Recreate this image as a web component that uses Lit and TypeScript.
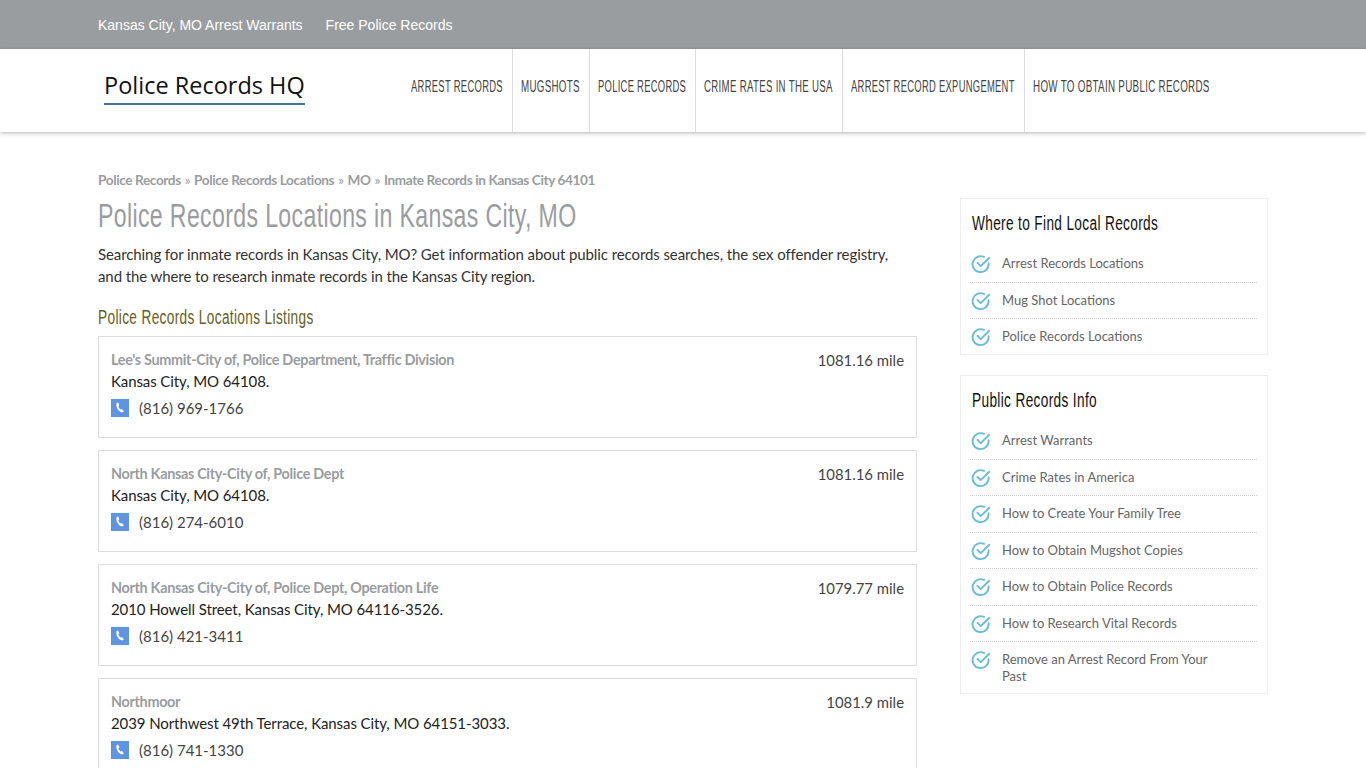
import { LitElement, html, css, svg } from 'lit';
import { customElement } from 'lit/decorators.js';

interface Listing {
  name: string;
  address: string;
  phone: string;
  distance: string;
}

interface NavItem {
  label: string;
  width: number;
  scale: number;
}

// no Oswald here, so the condensed look comes from scaling Liberation Sans
const NAV_ITEMS: NavItem[] = [
  { label: 'Arrest Records', width: 92, scale: 0.589 },
  { label: 'Mugshots', width: 59, scale: 0.61 },
  { label: 'Police Records', width: 88, scale: 0.587 },
  { label: 'Crime Rates in the USA', width: 129, scale: 0.604 },
  { label: 'Arrest Record Expungement', width: 164, scale: 0.587 },
  { label: 'How to Obtain Public Records', width: 177, scale: 0.612 },
];

const LISTINGS: Listing[] = [
  { name: "Lee's Summit-City of, Police Department, Traffic Division", address: 'Kansas City, MO 64108.', phone: '(816) 969-1766', distance: '1081.16 mile' },
  { name: 'North Kansas City-City of, Police Dept', address: 'Kansas City, MO 64108.', phone: '(816) 274-6010', distance: '1081.16 mile' },
  { name: 'North Kansas City-City of, Police Dept, Operation Life', address: '2010 Howell Street, Kansas City, MO 64116-3526.', phone: '(816) 421-3411', distance: '1079.77 mile' },
  { name: 'Northmoor', address: '2039 Northwest 49th Terrace, Kansas City, MO 64151-3033.', phone: '(816) 741-1330', distance: '1081.9 mile' },
];

const LOCAL_LINKS = ['Arrest Records Locations', 'Mug Shot Locations', 'Police Records Locations'];

const INFO_LINKS = [
  'Arrest Warrants',
  'Crime Rates in America',
  'How to Create Your Family Tree',
  'How to Obtain Mugshot Copies',
  'How to Obtain Police Records',
  'How to Research Vital Records',
  'Remove an Arrest Record From Your Past',
];

const checkIcon = svg`<svg class="check" width="20" height="20" viewBox="0 0 20 20" fill="none" stroke="#6bbcd6" stroke-width="1.9" stroke-linecap="round" stroke-linejoin="round">
  <path d="M17.6 9.2v1a8 8 0 1 1-4.6-7.3" />
  <path d="M6.4 8.8l3.3 3.3 8.5-8.3" />
</svg>`;

const phoneIcon = svg`<svg class="phone" width="18" height="18" viewBox="0 0 18 18">
  <rect width="18" height="18" fill="#5f94e0" />
  <path fill="#fff" d="M5.6 4.1l1.5-.5 1.3 2.7-1 .9c.3 1.300 1.200 2.500 2.300 3.300l1.200-.6 2 2.300-1.200 1c-1.200.5-2.700-.3-4-1.700C6 9.900 4.800 7.300 5.600 4.100z" />
</svg>`;

@customElement('app-root')
export class AppRoot extends LitElement {
  static styles = css`
    :host {
      display: block;
      height: 768px;
      overflow: hidden;
      background: #fff;
      font-family: Lato, sans-serif;
      color: #333;
    }

    a {
      color: inherit;
      text-decoration: none;
    }

    .container {
      width: 1170px;
      margin: 0 auto;
    }

    .narrow {
      display: inline-block;
      white-space: nowrap;
      letter-spacing: 0.5px;
      transform: scaleX(0.7);
      transform-origin: left center;
    }

    .topbar {
      height: 49px;
      background: #9a9da0;
    }

    .topbar .container {
      display: flex;
      gap: 23px;
      padding-top: 16px;
      font: 14px/18px 'Liberation Sans', Arial, sans-serif;
      color: #fff;
    }

    .header {
      height: 83px;
      background: #fff;
      box-shadow: 0 1px 4px rgba(0, 0, 0, 0.3);
      position: relative;
    }

    .header .container {
      display: flex;
      height: 83px;
    }

    .logo {
      flex: none;
      width: 305px;
      padding: 20px 0 0 6px;
      box-sizing: border-box;
    }

    .logo-text {
      display: inline-block;
      white-space: nowrap;
      font: 500 23.5px/32px 'Open Sans', sans-serif;
      color: #111;
      border-bottom: 2px solid #41719f;
      height: 34px;
    }

    .nav {
      display: flex;
      height: 83px;
    }

    .nav a {
      display: block;
      padding: 28px 9px 0 8px;
      border-left: 1px solid #ddd;
      font: 400 16px/20px 'Liberation Sans', sans-serif;
      letter-spacing: 0.5px;
      text-transform: uppercase;
      color: #444;
      white-space: nowrap;
    }

    .nav a:first-child {
      border-left: none;
    }

    .nav span {
      display: block;
      transform-origin: left center;
    }

    .main {
      display: grid;
      grid-template-columns: 819px 308px;
      column-gap: 43px;
      padding-top: 40px;
    }

    .crumbs {
      font-size: 13.6px;
      line-height: 18px;
      font-weight: 700;
      color: #9a9da0;
      margin-top: -1px;
      letter-spacing: -0.38px;
    }

    .crumbs span {
      font-weight: 400;
      padding: 0 1px;
    }

    h1 {
      margin: 7px 0 0;
      font: 400 32.5px/40px 'Liberation Sans', sans-serif;
      color: #9a9da0;
    }

    h1 .narrow {
      transform: scaleX(0.711);
    }

    .intro {
      margin: 7px 0 0;
      max-width: 800px;
      font-size: 15px;
      line-height: 22px;
      letter-spacing: -0.09px;
      color: #333;
    }

    h2 {
      margin: 17px 0 0;
      font: 400 19.5px/26px 'Liberation Sans', sans-serif;
      color: #66601f;
    }

    .listings {
      display: flex;
      flex-direction: column;
      gap: 12px;
      margin-top: 6px;
    }

    .listing {
      box-sizing: border-box;
      height: 102px;
      border: 1px solid #ddd;
      padding: 12px 12px 0;
      display: flex;
      justify-content: space-between;
    }

    .listing-name {
      font-size: 14.4px;
      line-height: 20px;
      font-weight: 700;
      color: #9a9da0;
      letter-spacing: -0.31px;
    }

    .listing-address {
      font-size: 15px;
      line-height: 22px;
      letter-spacing: -0.09px;
      color: #222;
    }

    .listing-phone {
      display: flex;
      align-items: center;
      gap: 10px;
      margin-top: 7px;
      font-size: 15px;
      line-height: 18px;
      color: #444;
    }

    .phone {
      flex: none;
    }

    .listing-distance {
      margin-top: 1px;
      font-size: 14.9px;
      line-height: 20px;
      color: #444;
    }

    .sidebar {
      display: flex;
      flex-direction: column;
      gap: 20px;
      padding-top: 26px;
    }

    .widget {
      border: 1px solid #eee;
      padding: 10px 10px 0 9px;
    }

    .widget h3 {
      margin: 0 0 9px 2px;
      font: 400 19.5px/28px 'Liberation Sans', sans-serif;
      color: #111;
    }

    .widget ul {
      list-style: none;
      margin: 0;
      padding: 0;
    }

    .widget li {
      display: flex;
      gap: 11px;
      padding: 8px 0 7.5px 1px;
      border-bottom: 1px dotted #ccc;
      font-size: 13px;
      line-height: 17px;
      color: #666;
      min-height: 20px;
    }

    .widget li:last-child {
      border-bottom: none;
      padding-bottom: 7px;
    }

    .widget li a {
      margin: 1px 0;
      padding-right: 40px;
    }

    .check {
      flex: none;
    }
  `;

  private renderListing(item: Listing) {
    return html`
      <div class="listing">
        <div>
          <a class="listing-name" href="#">${item.name}</a>
          <div class="listing-address">${item.address}</div>
          <div class="listing-phone">${phoneIcon}<span>${item.phone}</span></div>
        </div>
        <div class="listing-distance">${item.distance}</div>
      </div>
    `;
  }

  private renderWidget(title: string, links: string[]) {
    return html`
      <div class="widget">
        <h3><span class="narrow">${title}</span></h3>
        <ul>
          ${links.map((l) => html`<li>${checkIcon}<a href="#">${l}</a></li>`)}
        </ul>
      </div>
    `;
  }

  render() {
    return html`
      <div class="topbar">
        <div class="container">
          <a href="#">Kansas City, MO Arrest Warrants</a>
          <a href="#">Free Police Records</a>
        </div>
      </div>
      <header class="header">
        <div class="container">
          <div class="logo"><span class="logo-text">Police Records HQ</span></div>
          <nav class="nav">
            ${NAV_ITEMS.map(
              (n) => html`<a href="#" style="width:${n.width}px"><span style="transform:scaleX(${n.scale})">${n.label}</span></a>`
            )}
          </nav>
        </div>
      </header>
      <div class="container main">
        <main>
          <div class="crumbs">
            Police Records <span>»</span> Police Records Locations <span>»</span> MO <span>»</span> Inmate Records in Kansas City 64101
          </div>
          <h1><span class="narrow">Police Records Locations in Kansas City, MO</span></h1>
          <p class="intro">
            Searching for inmate records in Kansas City, MO? Get information about public records searches, the sex offender registry, and the where to research inmate records in the Kansas City region.
          </p>
          <h2><span class="narrow">Police Records Locations Listings</span></h2>
          <div class="listings">${LISTINGS.map((l) => this.renderListing(l))}</div>
        </main>
        <aside class="sidebar">
          ${this.renderWidget('Where to Find Local Records', LOCAL_LINKS)}
          ${this.renderWidget('Public Records Info', INFO_LINKS)}
        </aside>
      </div>
    `;
  }
}
